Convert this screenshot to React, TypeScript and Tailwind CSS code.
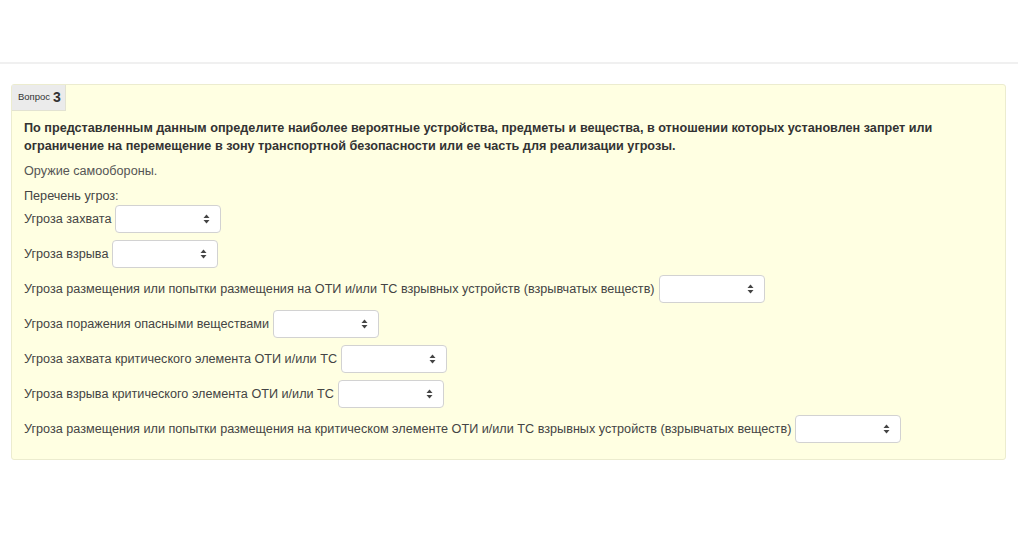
import React from 'react';

const threats: string[] = [
  'Угроза захвата',
  'Угроза взрыва',
  'Угроза размещения или попытки размещения на ОТИ и/или ТС взрывных устройств (взрывчатых веществ)',
  'Угроза поражения опасными веществами',
  'Угроза захвата критического элемента ОТИ и/или ТС',
  'Угроза взрыва критического элемента ОТИ и/или ТС',
  'Угроза размещения или попытки размещения на критическом элементе ОТИ и/или ТС взрывных устройств (взрывчатых веществ)',
];

const SelectBox: React.FC = () => (
  <span className="ml-[4px] inline-flex h-[28px] w-[106px] items-center justify-end rounded-[4px] border border-[#d2d2d2] bg-white pr-[10px] align-middle">
    <svg width="7" height="10" viewBox="0 0 7 10" className="text-[#444]">
      <path d="M3.5 0.5 L6.5 4 H0.5 Z" fill="currentColor" />
      <path d="M3.5 9.5 L6.5 6 H0.5 Z" fill="currentColor" />
    </svg>
  </span>
);

export default function App() {
  return (
    <div className="h-[556px] w-[1024px] bg-white font-['Liberation_Sans',Arial,sans-serif] text-[12.65px] text-[#333]">
      <div className="h-[64px] w-[1018px] border-b-2 border-[#f0f0f0]" />
      <div className="ml-[11px] mt-[20px] w-[995px] rounded-[3px] border border-[#ececcf] bg-[#ffffe2] pb-[16px]">
        <div className="inline-flex h-[26px] items-center border-r border-b border-[#e2e2d2] bg-[#ebebeb] pl-[6px] pr-[4px] text-[#333]">
          <span className="text-[9.5px]">Вопрос</span>
          <span className="ml-[3px] text-[14px] font-bold">3</span>
        </div>
        <div className="px-[12px] pt-[8px]">
          <p className="font-bold leading-[18px] text-[#333]">
            По представленным данным определите наиболее вероятные устройства, предметы и вещества, в отношении которых установлен запрет или ограничение на перемещение в зону транспортной безопасности или ее часть для реализации угрозы.
          </p>
          <p className="mt-[7px] leading-[18px] text-[#555]">Оружие самообороны.</p>
          <p className="mt-[7px] leading-[18px] text-[#444]">Перечень угроз:</p>
          <div className="flex flex-col gap-[7px] text-[#444]">
            {threats.map((t, i) => (
              <div key={i} className="flex items-center leading-[18px]">
                <span>{t}</span>
                <SelectBox />
              </div>
            ))}
          </div>
        </div>
      </div>
    </div>
  );
}
